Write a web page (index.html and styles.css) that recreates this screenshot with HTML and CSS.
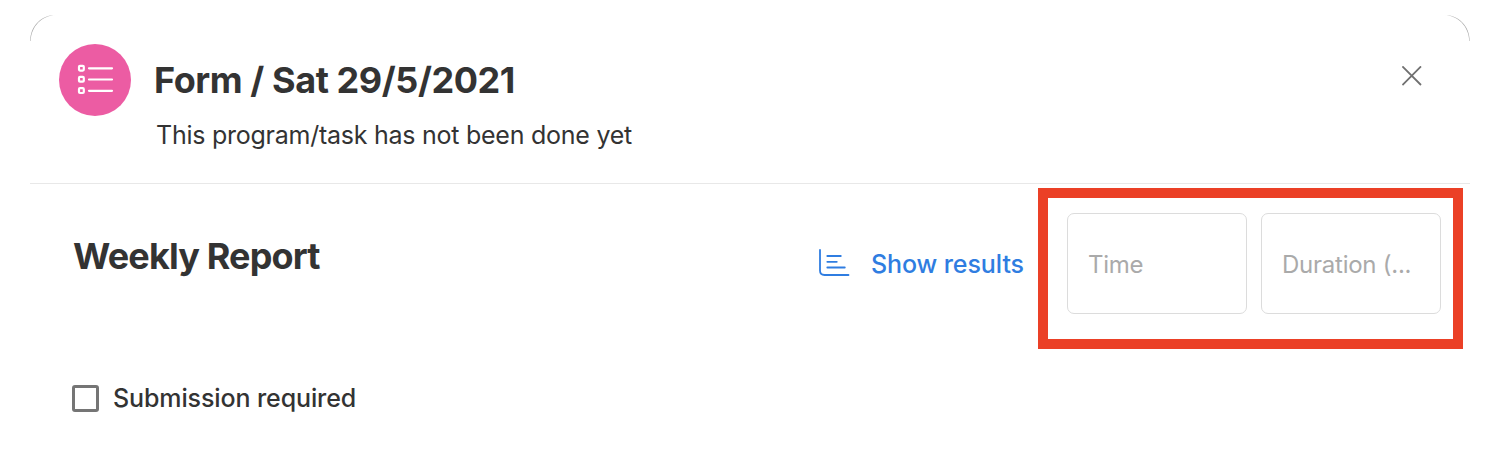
FILE: index.html
```html
<!DOCTYPE html>
<html lang="en">
<head>
    <meta charset="UTF-8">
    <meta name="viewport" content="width=device-width, initial-scale=1.0">
    <title>Weekly Report</title>
    <link rel="stylesheet" href="styles.css">
</head>
<body>
    <div class="modal">
        <svg class="corner corner-left" width="28" height="28" viewBox="0 0 28 28">
            <path d="M.2 27C.5 12 11 1 26 1C12 1.6 1.3 12 .7 27z"/>
        </svg>
        <svg class="corner corner-right" width="28" height="28" viewBox="0 0 28 28">
            <path d="M.2 27C.5 12 11 1 26 1C12 1.6 1.3 12 .7 27z"/>
        </svg>
        <header class="header">
            <div class="form-icon">
                <svg width="72" height="72" viewBox="0 0 72 72" fill="none" stroke="#fff" stroke-width="2.2">
                    <rect x="20" y="21.8" width="4.8" height="4.8" rx="1"/>
                    <rect x="20" y="32.9" width="4.8" height="4.8" rx="1"/>
                    <rect x="20" y="44.2" width="4.8" height="4.8" rx="1"/>
                    <path d="M30 24.3h23M30 35.5h23M30 46.8h23" stroke-width="2.2" stroke-linecap="round"/>
                </svg>
            </div>
            <div class="heading">
                <h1 class="title">Form / Sat 29/5/2021</h1>
                <p class="status">This program/task has not been done yet</p>
            </div>
            <button class="close-btn" aria-label="Close">
                <svg width="20" height="20" viewBox="0 0 20 20" fill="none" stroke="#707070" stroke-width="1.8">
                    <path d="M.4 .4l18.6 18.6M19 .4L.4 19"/>
                </svg>
            </button>
        </header>
        <main class="content">
            <div class="report">
                <h2 class="report-title">Weekly Report</h2>
                <a class="results">
                    <svg width="32" height="28" viewBox="0 0 32 28" fill="none" stroke="#2f7de1" stroke-width="1.8" stroke-linecap="round">
                        <path d="M2 1v20.5q0 4.5 4.5 4.5h24M9.3 7h13.5M9.3 12.8h9.5M9.3 18.5h17.5"/>
                    </svg>
                    <span>Show results</span>
                </a>
                <div class="fields">
                    <div class="field">Time</div>
                    <div class="field">Duration (...</div>
                    <div class="highlight"></div>
                </div>
            </div>
            <div class="submission">
                <span class="checkbox"></span>
                <span>Submission required</span>
            </div>
        </main>
    </div>
</body>
</html>
```
FILE: styles.css
```css
* {
    box-sizing: border-box;
}

body {
    background-color: #fff;
    color: #333;
    font-family: 'Inter', Arial, sans-serif;
    margin: 0;
    padding: 14px 34px 0 30px;
    height: 474px;
    overflow: hidden;
}

.modal {
    position: relative;
    background-color: #fff;
    border-radius: 28px;
}

.corner {
    position: absolute;
    top: 0;
    fill: #aaa;
}

.corner-left {
    left: 0;
}

.corner-right {
    right: 0;
    transform: scaleX(-1);
}

.header {
    display: flex;
    height: 170px;
    padding: 30px 48px 0 29px;
    border-bottom: 1px solid #e8e8e8;
}

.form-icon {
    width: 72px;
    height: 72px;
    border-radius: 50%;
    background-color: #ec5ca3;
}

.form-icon svg {
    display: block;
}

.heading {
    flex: 1;
    padding: 14px 0 0 23px;
}

.title {
    margin: 0;
    font-size: 36px;
    line-height: 44px;
    font-weight: 700;
    letter-spacing: -0.42px;
}

.status {
    margin: 17px 0 0 2px;
    font-size: 25px;
    line-height: 32px;
    letter-spacing: -0.25px;
}

.close-btn {
    width: 20px;
    height: 20px;
    margin-top: 22px;
    padding: 0;
    border: none;
    background: none;
    cursor: pointer;
}

.close-btn svg {
    display: block;
}

.content {
    padding: 29px 29px 0 42px;
}

.report {
    display: flex;
    align-items: flex-start;
}

.report-title {
    flex: 1;
    margin: 21px 0 0 1px;
    font-size: 36px;
    line-height: 44px;
    font-weight: 700;
    letter-spacing: -0.85px;
}

.results {
    display: flex;
    align-items: center;
    gap: 21px;
    height: 32px;
    margin: 35px 43px 0 0;
    color: #2f7de1;
    font-size: 25px;
    font-weight: 500;
    letter-spacing: -0.08px;
    white-space: nowrap;
}

.results svg {
    margin-bottom: 2px;
}

.fields {
    position: relative;
    display: flex;
    gap: 14px;
}

.field {
    width: 180px;
    height: 101px;
    padding: 4px 20px 0;
    border: 1px solid #dcdcdc;
    border-radius: 7px;
    color: #aaa;
    font-size: 24px;
    line-height: 94px;
    letter-spacing: -0.25px;
    white-space: nowrap;
}

/* red frame drawn around the time and duration fields */
.highlight {
    position: absolute;
    top: -25px;
    right: -22px;
    bottom: -35px;
    left: -29px;
    border: 10px solid #eb4026;
}

.submission {
    display: flex;
    align-items: center;
    gap: 14px;
    height: 32px;
    margin-top: 68px;
    font-size: 25px;
    font-weight: 500;
    letter-spacing: -0.11px;
}

.checkbox {
    width: 27px;
    height: 27px;
    border: 3px solid #757575;
    border-radius: 3px;
}
```
